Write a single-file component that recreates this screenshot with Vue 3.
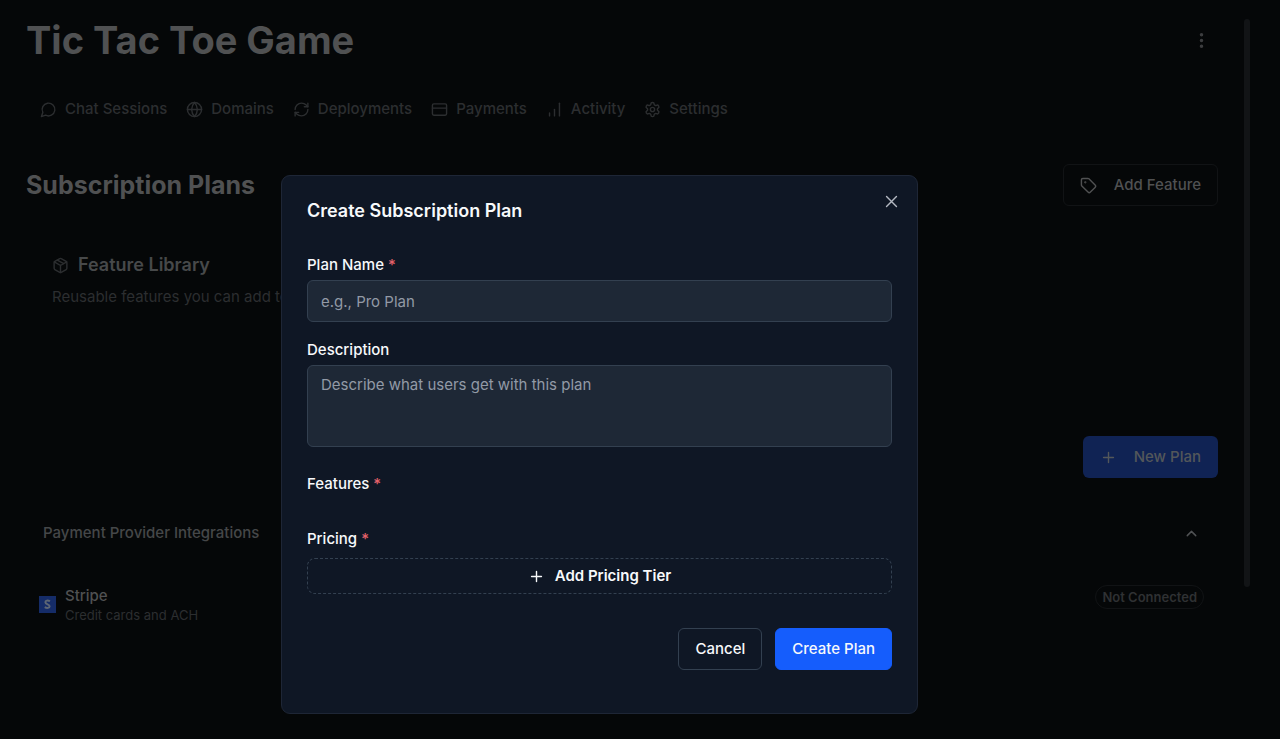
<script setup>
import { ref } from 'vue'

const tabs = [
  { label: 'Chat Sessions', paths: ['M7.9 20A9 9 0 1 0 4 16.1L2 22Z'] },
  { label: 'Domains', paths: ['M12 2a10 10 0 1 0 0 20 10 10 0 1 0 0-20Z', 'M12 2a14.5 14.5 0 0 0 0 20 14.5 14.5 0 0 0 0-20', 'M2 12h20'] },
  { label: 'Deployments', paths: ['M3 12a9 9 0 0 1 9-9 9.75 9.75 0 0 1 6.74 2.74L21 8', 'M21 3v5h-5', 'M21 12a9 9 0 0 1-9 9 9.75 9.75 0 0 1-6.74-2.74L3 16', 'M8 16H3v5'] },
  { label: 'Payments', paths: ['M4 4h16a2 2 0 0 1 2 2v12a2 2 0 0 1-2 2H4a2 2 0 0 1-2-2V6a2 2 0 0 1 2-2Z', 'M2 10h20'] },
  { label: 'Activity', paths: ['M5 21v-4', 'M12 21v-9', 'M19 21V3'] },
  { label: 'Settings', paths: ['M12.22 2h-.44a2 2 0 0 0-2 2v.18a2 2 0 0 1-1 1.73l-.43.25a2 2 0 0 1-2 0l-.15-.08a2 2 0 0 0-2.73.73l-.22.38a2 2 0 0 0 .73 2.73l.15.1a2 2 0 0 1 1 1.72v.51a2 2 0 0 1-1 1.74l-.15.09a2 2 0 0 0-.73 2.73l.22.38a2 2 0 0 0 2.73.73l.15-.08a2 2 0 0 1 2 0l.43.25a2 2 0 0 1 1 1.73V20a2 2 0 0 0 2 2h.44a2 2 0 0 0 2-2v-.18a2 2 0 0 1 1-1.73l.43-.25a2 2 0 0 1 2 0l.15.08a2 2 0 0 0 2.73-.73l.22-.39a2 2 0 0 0-.73-2.73l-.15-.08a2 2 0 0 1-1-1.74v-.5a2 2 0 0 1 1-1.74l.15-.09a2 2 0 0 0 .73-2.73l-.22-.38a2 2 0 0 0-2.73-.73l-.15.08a2 2 0 0 1-2 0l-.43-.25a2 2 0 0 1-1-1.73V4a2 2 0 0 0-2-2z', 'M12 9a3 3 0 1 0 0 6 3 3 0 1 0 0-6Z'] }
]

const planName = ref('')
const description = ref('')
</script>

<template>
  <div class="app">
    <main class="page">
      <header class="header">
        <h1>Tic Tac Toe Game</h1>
        <button class="more" type="button" aria-label="More options">
          <svg class="icon" viewBox="0 0 24 24"><path d="M12 4v.01M12 12v.01M12 20v.01" stroke-width="5" /></svg>
        </button>
      </header>

      <nav class="tabs">
        <a v-for="tab in tabs" :key="tab.label" href="#">
          <svg class="icon" viewBox="0 0 24 24"><path v-for="d in tab.paths" :key="d" :d="d" /></svg>
          {{ tab.label }}
        </a>
      </nav>

      <section class="plans">
        <div class="plans-head">
          <h2>Subscription Plans</h2>
          <button class="btn outline" type="button">
            <svg class="icon" viewBox="0 0 24 24"><path d="M12.586 2.586A2 2 0 0 0 11.172 2H4a2 2 0 0 0-2 2v7.172a2 2 0 0 0 .586 1.414l8.704 8.704a2.426 2.426 0 0 0 3.42 0l6.58-6.58a2.426 2.426 0 0 0 0-3.42z" /><circle cx="7.5" cy="7.5" r=".6" /></svg>
            Add Feature
          </button>
        </div>
        <div class="library">
          <h3>
            <svg class="icon" viewBox="0 0 24 24"><path d="M11 21.73a2 2 0 0 0 2 0l7-4A2 2 0 0 0 21 16V8a2 2 0 0 0-1-1.73l-7-4a2 2 0 0 0-2 0l-7 4A2 2 0 0 0 3 8v8a2 2 0 0 0 1 1.73z" /><path d="M12 22V12M3.29 7 12 12l8.71-5M7.5 4.27l9 5.15" /></svg>
            Feature Library
          </h3>
          <p>Reusable features you can add to</p>
        </div>
        <div class="plans-action">
          <button class="btn primary" type="button">
            <svg class="icon" viewBox="0 0 24 24"><path d="M5 12h14M12 5v14" /></svg>
            New Plan
          </button>
        </div>
      </section>

      <section class="providers">
        <button class="providers-head" type="button" aria-expanded="true">
          Payment Provider Integrations
          <svg class="icon" viewBox="0 0 24 24"><path d="m6 15 6-6 6 6" /></svg>
        </button>
        <div class="provider">
          <svg class="stripe" viewBox="0 0 17 17" aria-hidden="true"><path class="tile" d="M0 0h17v17H0z" /><path class="mark" d="M11 5.2C8.600 4.100 6.400 4.400 6.400 6.200c0 2.400 4.200 1.800 4.200 4 0 1.900-2.600 2.200-4.900 1" /></svg>
          <div class="provider-text">
            <strong>Stripe</strong>
            <span>Credit cards and ACH</span>
          </div>
          <span class="badge">Not Connected</span>
        </div>
      </section>
    </main>
    <div class="scroll-thumb"></div>

    <div class="overlay">
      <form class="dialog" role="dialog" aria-labelledby="dialog-title" @submit.prevent>
        <h2 id="dialog-title">Create Subscription Plan</h2>
        <button class="close" type="button" aria-label="Close">
          <svg class="icon" viewBox="0 0 24 24"><path d="M5 5l14 14M19 5 5 19" /></svg>
        </button>
        <div class="field">
          <label for="plan-name">Plan Name <i>*</i></label>
          <input id="plan-name" v-model="planName" type="text" placeholder="e.g., Pro Plan" />
        </div>
        <div class="field">
          <label for="plan-description">Description</label>
          <textarea id="plan-description" v-model="description" placeholder="Describe what users get with this plan"></textarea>
        </div>
        <div class="group features">Features <i>*</i></div>
        <div class="group">Pricing <i>*</i></div>
        <button class="add-tier" type="button">
          <svg class="icon" viewBox="0 0 24 24"><path d="M5 12h14M12 5v14" /></svg>
          Add Pricing Tier
        </button>
        <div class="actions">
          <button class="cancel" type="button">Cancel</button>
          <button class="create" type="submit">Create Plan</button>
        </div>
      </form>
    </div>
  </div>
</template>

<style>
body {
  margin: 0;
  background: #050708;
}
</style>

<style scoped>
.app {
  position: relative;
  display: flex;
  align-items: flex-start;
  min-height: 100vh;
  background: #050708;
  color: #505152;
  font-family: Inter, "Liberation Sans", sans-serif;
  font-size: 15px;
  line-height: 20px;
}
.app *, .app *::before {
  box-sizing: border-box;
}
h1, h2, h3, p {
  margin: 0;
}
button, input, textarea {
  font: inherit;
  color: inherit;
}
button {
  padding: 0;
  border: 0;
  background: none;
  cursor: pointer;
}
i {
  font-style: normal;
}
.icon {
  width: 17px;
  height: 17px;
  flex: none;
  fill: none;
  stroke: currentColor;
  stroke-width: 2;
  stroke-linecap: round;
  stroke-linejoin: round;
}
.page {
  flex: 1;
  padding: 16px 26px 0;
}
.header {
  display: flex;
  align-items: center;
  justify-content: space-between;
}
h1 {
  font-size: 38px;
  line-height: 48px;
  font-weight: 700;
}
.more {
  display: flex;
  padding: 8px;
  color: #3c3d3f;
}
.tabs {
  display: flex;
  gap: 19px;
  margin-top: 35px;
  padding: 0 14px;
  color: #2c2e30;
  font-weight: 500;
}
.tabs a {
  display: flex;
  align-items: center;
  gap: 8px;
  color: inherit;
  text-decoration: none;
}
.plans {
  margin-top: 45px;
}
.plans-head {
  display: flex;
  align-items: center;
  justify-content: space-between;
}
.plans h2 {
  font-size: 25px;
  line-height: 34px;
  font-weight: 700;
}
.btn {
  display: flex;
  align-items: center;
  gap: 17px;
  height: 42px;
  padding: 0 16px;
  border: 1px solid transparent;
  border-radius: 6px;
  font-weight: 500;
}
.outline {
  border-color: #111315;
}
.primary {
  background: #102354;
  color: #53575a;
}
.library {
  padding: 46px 26px 0;
}
h3 {
  display: flex;
  align-items: center;
  gap: 9px;
  font-size: 18px;
  line-height: 26px;
  font-weight: 600;
  color: #47494a;
}
h3 .icon, .library p {
  color: #2c2e30;
}
.library p {
  margin-top: 9px;
}
.plans-action {
  display: flex;
  justify-content: flex-end;
  margin-top: 129px;
}
.providers {
  margin-top: 45px;
  padding: 0 14px 0 13px;
}
.providers-head {
  display: flex;
  align-items: center;
  justify-content: space-between;
  width: 100%;
  padding: 0 4px;
  font-weight: 500;
  color: #454749;
}
.providers-head .icon {
  color: #505254;
}
.provider {
  display: flex;
  align-items: center;
  gap: 9px;
  margin-top: 42px;
}
.stripe {
  width: 17px;
  height: 17px;
}
.tile {
  fill: #152c68;
}
.mark {
  fill: none;
  stroke: #5d6674;
  stroke-width: 2;
}
.provider-text {
  flex: 1;
  display: flex;
  flex-direction: column;
}
.provider-text strong {
  line-height: 22px;
  font-weight: 500;
}
.provider-text span {
  font-size: 13px;
  line-height: 16px;
  color: #2c2e30;
}
.badge {
  align-self: flex-start;
  padding: 1px 6px;
  border: 1px solid #111315;
  border-radius: 12px;
  font-size: 13px;
  font-weight: 600;
  color: #2f3133;
}
.scroll-thumb {
  width: 6px;
  height: 568px;
  margin: 19px 30px 0 0;
  border-radius: 3px;
  background: #121416;
}
.overlay {
  position: absolute;
  inset: 0;
  display: flex;
  justify-content: center;
  align-items: flex-start;
  padding: 175px 81px 0 0;
}
.dialog {
  position: relative;
  width: 637px;
  padding: 22px 25px 43px;
  border: 1px solid #1e2636;
  border-radius: 9px;
  background: #0f1725;
  color: #f7f9fb;
  font-weight: 500;
}
.dialog h2 {
  margin-bottom: 31px;
  font-size: 18px;
  line-height: 26px;
  font-weight: 600;
}
.dialog i {
  color: #e5616a;
}
.close {
  position: absolute;
  top: 17px;
  right: 17px;
  display: flex;
  color: #b4b9c2;
}
.field {
  display: flex;
  flex-direction: column;
  gap: 5px;
  margin-bottom: 18px;
}
.field input, .field textarea {
  width: 100%;
  height: 42px;
  padding: 0 13px;
  border: 1px solid #334050;
  border-radius: 6px;
  outline: 0;
  background: #1e2836;
  font-weight: 400;
}
.field textarea {
  height: 82px;
  padding: 9px 13px;
  resize: none;
}
.field ::placeholder {
  color: #929aa6;
  opacity: 1;
}
.features {
  margin: 27px 0 35px;
}
.add-tier {
  display: flex;
  align-items: center;
  justify-content: center;
  gap: 10px;
  width: 100%;
  height: 36px;
  margin-top: 9px;
  border: 1px dashed #334050;
  border-radius: 8px;
  font-weight: 600;
}
.actions {
  display: flex;
  justify-content: flex-end;
  gap: 13px;
  margin-top: 34px;
}
.actions button {
  height: 42px;
  padding: 0 16px;
  border: 1px solid #334050;
  border-radius: 6px;
}
.actions .create {
  border-color: #155dfc;
  background: #155dfc;
}
</style>
